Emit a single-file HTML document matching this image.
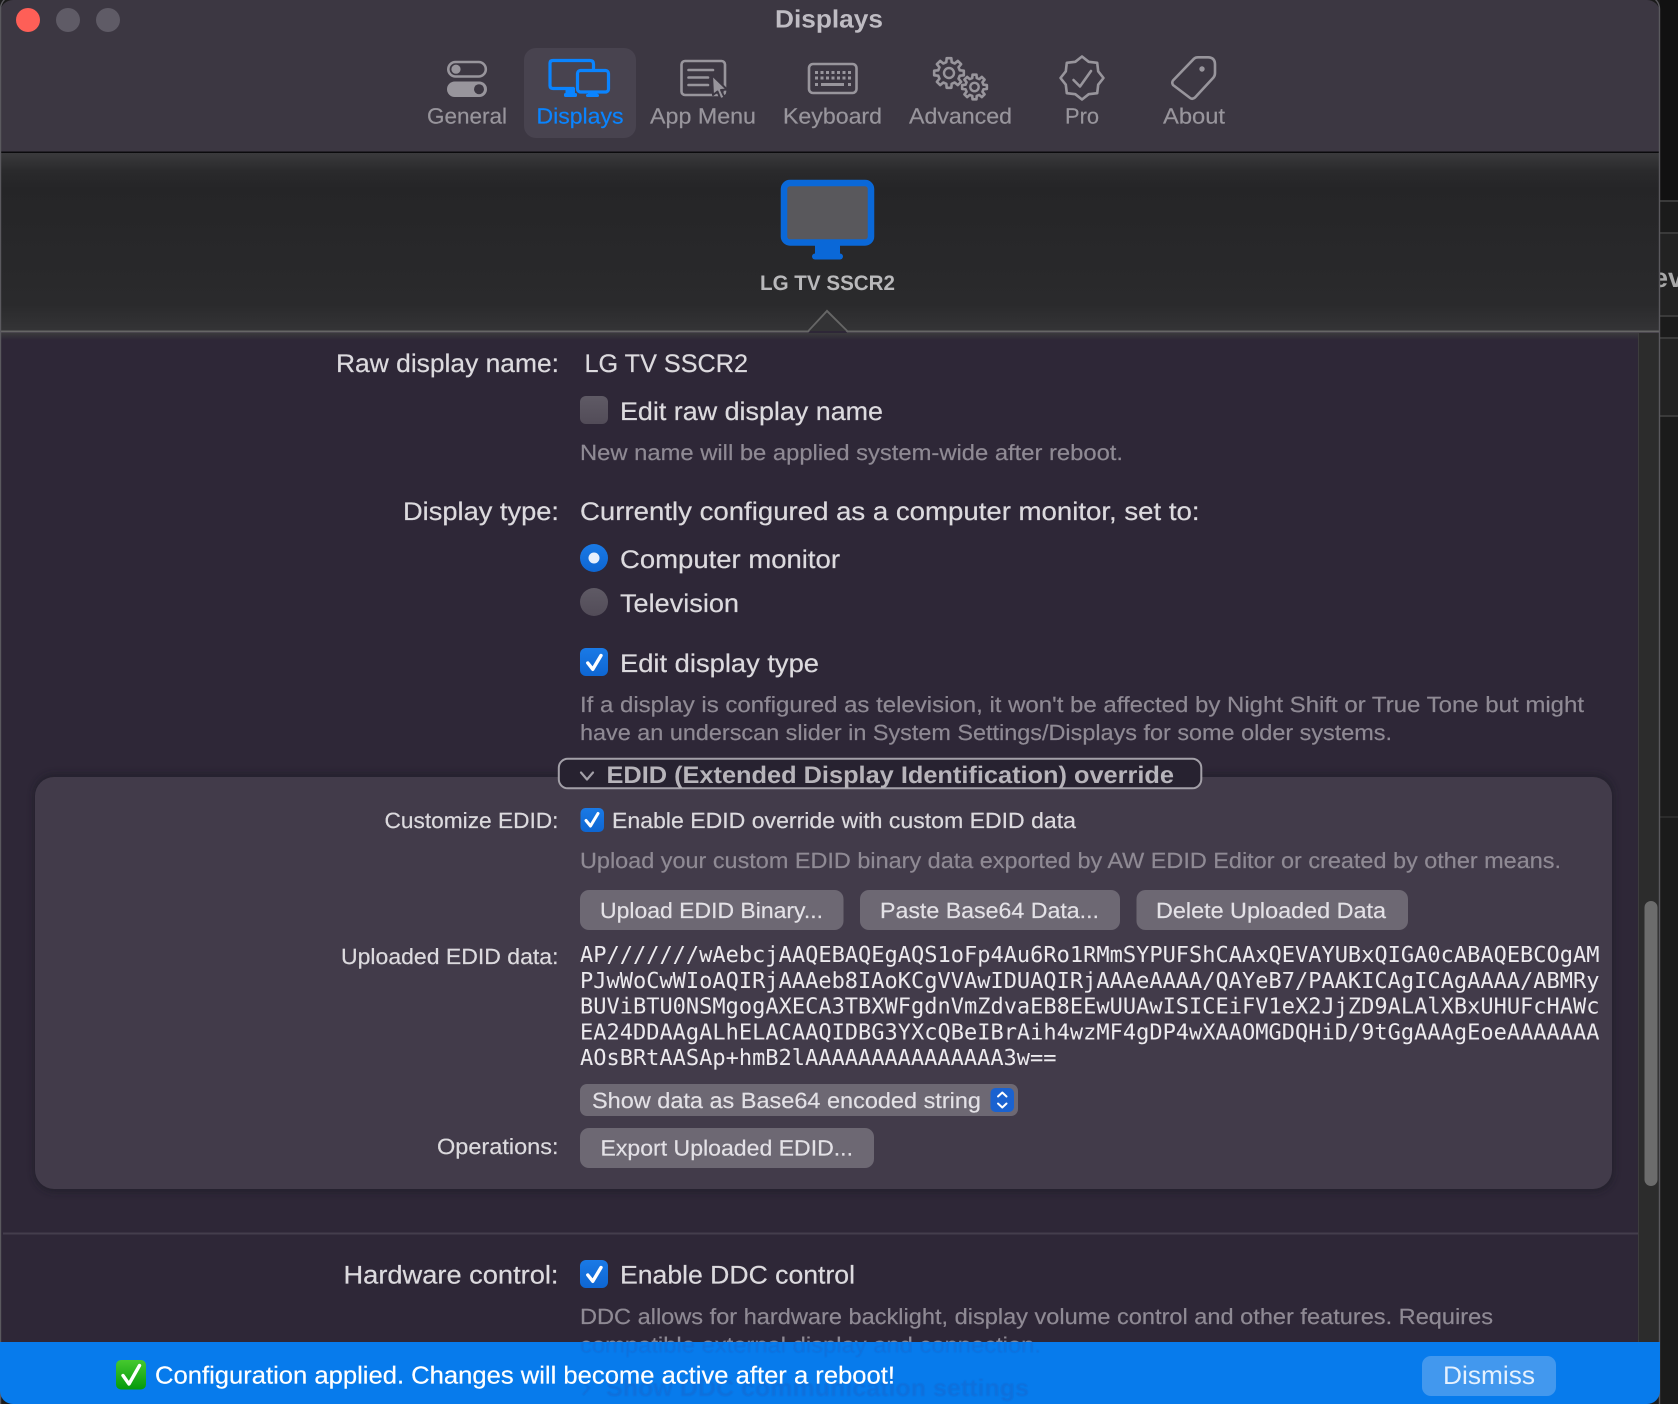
<!DOCTYPE html>
<html lang="en">
<head>
<meta charset="utf-8">
<title>Displays</title>
<style>
html,body{margin:0;padding:0;width:1678px;height:1404px;overflow:hidden;background:#1b1b1b}
svg{display:block}
text{font-family:"Liberation Sans",sans-serif;text-rendering:geometricPrecision;white-space:pre}
.tb{font-size:22px;fill:#98959c;stroke:#98959c;stroke-width:.2}
.lb{font-size:25.5px;fill:#dcdade;stroke:#dcdade;stroke-width:.22}
.sm{font-size:22px;fill:#dcdade;stroke:#dcdade;stroke-width:.2}
.hp{font-size:22px;fill:#8f8a94;stroke:#8f8a94;stroke-width:.2}
.bt{font-size:22px;fill:#e3e1e6;stroke:#e3e1e6;stroke-width:.18}
.mo{font-family:"DejaVu Sans Mono","Liberation Mono",monospace;font-size:22px;fill:#eceaee}
.ic{fill:none;stroke:#98959c;stroke-width:2.6;stroke-linejoin:round;stroke-linecap:round}
.ck{fill:none;stroke:#fff;stroke-width:3.4;stroke-linecap:round;stroke-linejoin:round}
</style>
</head>
<body>
<svg xmlns="http://www.w3.org/2000/svg" width="1678" height="1404" viewBox="0 0 1678 1404">
<defs>
<clipPath id="win"><rect x="0" y="0" width="1660" height="1404" rx="13"/></clipPath>
<clipPath id="aboveBanner"><rect x="0" y="0" width="1678" height="1342"/></clipPath>
<clipPath id="belowBanner"><rect x="0" y="1342" width="1678" height="62"/></clipPath>
<linearGradient id="band" x1="0" y1="0" x2="0" y2="1">
<stop offset="0" stop-color="#3a3a3c"/><stop offset=".1" stop-color="#2a2a2c"/><stop offset=".2" stop-color="#252527"/><stop offset=".85" stop-color="#2a2a2c"/><stop offset="1" stop-color="#343436"/>
</linearGradient>
<linearGradient id="fade" x1="0" y1="0" x2="0" y2="1">
<stop offset="0" stop-color="#3a3a3c"/><stop offset="1" stop-color="#2e2737"/>
</linearGradient>
<linearGradient id="off" x1="0" y1="0" x2="0" y2="1"><stop offset="0" stop-color="#5f5a65"/><stop offset="1" stop-color="#524c58"/></linearGradient>
<linearGradient id="on" x1="0" y1="0" x2="0" y2="1"><stop offset="0" stop-color="#1a7ae6"/><stop offset="1" stop-color="#0e66d2"/></linearGradient>
<linearGradient id="grn" x1="0" y1="0" x2="0" y2="1"><stop offset="0" stop-color="#46c92e"/><stop offset="1" stop-color="#049a0c"/></linearGradient>
<filter id="pshadow" x="-5%" y="-5%" width="110%" height="110%"><feGaussianBlur stdDeviation="3"/></filter>
<filter id="soft" x="-2%" y="-20%" width="104%" height="140%"><feGaussianBlur stdDeviation="0.5"/></filter>
</defs>

<!-- outside window -->
<rect width="1678" height="1404" fill="#1b1b1b"/>
<rect x="1660" y="0" width="18" height="200" fill="#111"/>
<rect x="1660" y="200" width="18" height="2" fill="#3a3a3a"/>
<rect x="1660" y="232" width="18" height="2" fill="#3a3a3a"/>
<rect x="1660" y="234" width="18" height="81" fill="#222"/>
<rect x="1660" y="315" width="18" height="2" fill="#3a3a3a"/>
<rect x="1660" y="337" width="18" height="2" fill="#3a3a3a"/>
<rect x="1660" y="339" width="18" height="76" fill="#222"/>
<rect x="1660" y="415" width="18" height="2" fill="#3a3a3a"/>
<rect x="1660" y="816" width="18" height="2" fill="#2b2b2b"/>
<text x="1653" y="287" font-size="27" font-weight="700" fill="#a8a8a8">ev</text>

<g clip-path="url(#win)">
<!-- header -->
<rect x="0" y="0" width="1660" height="153" fill="#3c3742"/>
<rect x="0" y="151.5" width="1660" height="1.6" fill="#0b0b0d"/>
<!-- display band -->
<rect x="0" y="153" width="1660" height="178" fill="url(#band)"/>
<!-- content -->
<rect x="0" y="331" width="1660" height="1073" fill="#2e2737"/>
<rect x="0" y="333" width="1660" height="7" fill="url(#fade)"/>
<!-- scrollbar track -->
<rect x="1638" y="333" width="22" height="1012" fill="#2c2c2c"/>
<rect x="1638" y="333" width="1" height="1012" fill="#3d3d3d"/>
<rect x="1644.500" y="901" width="13" height="285" rx="6.500" fill="#6c6c6c"/>
<!-- band line + triangle -->
<path d="M0 331.5H808L827 311L847.5 331.5H1660" fill="none" stroke="#666" stroke-width="2"/>
<path d="M809.5 331L827 312.5L846 331Z" fill="#333335"/>
</g>
<rect x="0.5" y="-4" width="1659" height="1420" rx="13" fill="none" stroke="#5a595e" stroke-width="1.400"/>

<!-- traffic lights -->
<circle cx="28" cy="20" r="12" fill="#fe5f57"/>
<circle cx="68" cy="20" r="12" fill="#5f5b66"/>
<circle cx="108" cy="20" r="12" fill="#5f5b66"/>
<text x="775" y="27.5" font-size="25" font-weight="700" fill="#bfbcc3" textLength="108" lengthAdjust="spacingAndGlyphs">Displays</text>

<!-- toolbar -->
<rect x="524" y="48" width="112" height="90" rx="12" fill="#48434f"/>
<text class="tb" x="427" y="123.5" textLength="80" lengthAdjust="spacingAndGlyphs">General</text>
<text class="tb" x="536.500" y="123.5" textLength="87" lengthAdjust="spacingAndGlyphs" style="fill:#0a84ff;stroke:#0a84ff">Displays</text>
<text class="tb" x="650" y="123.5" textLength="106" lengthAdjust="spacingAndGlyphs">App Menu</text>
<text class="tb" x="783" y="123.5" textLength="99" lengthAdjust="spacingAndGlyphs">Keyboard</text>
<text class="tb" x="909" y="123.5" textLength="103" lengthAdjust="spacingAndGlyphs">Advanced</text>
<text class="tb" x="1065" y="123.5" textLength="34" lengthAdjust="spacingAndGlyphs">Pro</text>
<text class="tb" x="1163" y="123.5" textLength="62" lengthAdjust="spacingAndGlyphs">About</text>

<!-- General icon -->
<rect x="448.3" y="62" width="37.5" height="14.5" rx="7.25" class="ic"/>
<circle cx="456" cy="69.2" r="4.6" fill="#98959c"/>
<rect x="447" y="81.5" width="40" height="15.5" rx="7.75" fill="#98959c"/>
<circle cx="479" cy="89.2" r="5" fill="#3c3742"/>

<!-- Displays icon -->
<g fill="none" stroke="#0a84ff" stroke-width="3.200" stroke-linejoin="round">
<path d="M574.500 88.500H553Q550 88.500 550 85.500V63Q550 60.500 553 60.500H590Q593.500 60.500 593.500 64V69"/>
<rect x="577.500" y="70.500" width="31" height="21.500" rx="3"/>
</g>
<rect x="565.500" y="88" width="9.500" height="6" fill="#0a84ff"/>
<rect x="564" y="93" width="13" height="4" rx="1.500" fill="#0a84ff"/>
<rect x="588" y="92" width="9.500" height="3" fill="#0a84ff"/>
<rect x="586" y="94" width="13" height="3" rx="1.500" fill="#0a84ff"/>

<!-- App Menu icon -->
<rect x="681.500" y="61" width="43.500" height="34" rx="3.500" class="ic"/>
<path d="M688.500 70H713M688.500 77.500H708M688.500 85H708" class="ic"/>
<path d="M712 75L727 89.500L721 90L724.500 97.500L720.500 99L717.500 91.500L713 95Z" fill="#98959c" stroke="#3c3742" stroke-width="2" stroke-linejoin="round"/>

<!-- Keyboard icon -->
<rect x="809" y="64" width="47.500" height="29" rx="4" class="ic"/>
<g fill="#98959c">
<rect x="815" y="71" width="3" height="3"/><rect x="820.500" y="71" width="3" height="3"/><rect x="826" y="71" width="3" height="3"/><rect x="831.500" y="71" width="3" height="3"/><rect x="837" y="71" width="3" height="3"/><rect x="842.500" y="71" width="3" height="3"/><rect x="848" y="71" width="3" height="3"/>
<rect x="815" y="76.500" width="3" height="3"/><rect x="820.500" y="76.500" width="3" height="3"/><rect x="826" y="76.500" width="3" height="3"/><rect x="831.500" y="76.500" width="3" height="3"/><rect x="837" y="76.500" width="3" height="3"/><rect x="842.500" y="76.500" width="3" height="3"/><rect x="848" y="76.500" width="3" height="3"/>
<rect x="815" y="83" width="3" height="3"/><rect x="821" y="83" width="23" height="3"/><rect x="848" y="83" width="3" height="3"/>
</g>

<!-- Advanced icon -->
<polygon transform="translate(949 73) scale(15)" vector-effect="non-scaling-stroke" class="ic" points=".718,-.179 .988,-.156 .988,.156 .718,.179 .634,.381 .809,.588 .588,.809 .381,.634 .179,.718 .156,.988 -.156,.988 -.179,.718 -.381,.634 -.588,.809 -.809,.588 -.634,.381 -.718,.179 -.988,.156 -.988,-.156 -.718,-.179 -.634,-.381 -.809,-.588 -.588,-.809 -.381,-.634 -.179,-.718 -.156,-.988 .156,-.988 .179,-.718 .381,-.634 .588,-.809 .809,-.588 .634,-.381"/>
<circle cx="949" cy="73" r="5" class="ic" style="stroke-width:2.4"/>
<polygon transform="translate(974.500 87) scale(12.500)" vector-effect="non-scaling-stroke" class="ic" points=".718,-.179 .988,-.156 .988,.156 .718,.179 .634,.381 .809,.588 .588,.809 .381,.634 .179,.718 .156,.988 -.156,.988 -.179,.718 -.381,.634 -.588,.809 -.809,.588 -.634,.381 -.718,.179 -.988,.156 -.988,-.156 -.718,-.179 -.634,-.381 -.809,-.588 -.588,-.809 -.381,-.634 -.179,-.718 -.156,-.988 .156,-.988 .179,-.718 .381,-.634 .588,-.809 .809,-.588 .634,-.381"/>
<circle cx="974.500" cy="87" r="4.200" class="ic" style="stroke-width:2.4"/>

<!-- Pro icon -->
<polygon transform="translate(1082 78)" class="ic" points="21.500,0 16.200,6.700 15.200,15.200 6.700,16.200 0,21.500 -6.700,16.200 -15.200,15.200 -16.200,6.700 -21.500,0 -16.200,-6.700 -15.200,-15.200 -6.700,-16.200 0,-21.500 6.700,-16.200 15.200,-15.200 16.200,-6.700"/>
<path d="M1073.500 80L1080 86.500L1091 71" class="ic"/>

<!-- About icon -->
<path d="M1173 80.500L1194 58.700Q1195.500 57.300 1198 57.300H1208Q1215 57.500 1215 64.500V73Q1215 75.500 1213.500 77.500L1195 97.500Q1192 100 1189.500 97.500L1173 85Q1171.500 82.500 1173 80.500Z" class="ic"/>
<circle cx="1202" cy="69" r="2.700" fill="#98959c"/>

<!-- monitor -->
<rect x="784" y="183" width="87" height="59.500" rx="6" fill="#59585c" stroke="#0a68d8" stroke-width="6.500"/>
<rect x="815" y="245" width="25" height="11" fill="#0a68d8"/>
<rect x="812" y="253.500" width="31" height="6" rx="3" fill="#0a68d8"/>
<text x="760" y="290" font-size="21" font-weight="700" fill="#b9b9bb" textLength="135" lengthAdjust="spacingAndGlyphs">LG TV SSCR2</text>

<!-- upper form -->
<text class="lb" x="336" y="372" textLength="223" lengthAdjust="spacingAndGlyphs">Raw display name:</text>
<text class="lb" x="584.500" y="372" textLength="163.500" lengthAdjust="spacingAndGlyphs">LG TV SSCR2</text>
<rect x="580" y="396" width="28" height="28" rx="6" fill="url(#off)"/>
<text class="lb" x="620" y="420" textLength="263" lengthAdjust="spacingAndGlyphs">Edit raw display name</text>
<text class="hp" x="580" y="460" textLength="543" lengthAdjust="spacingAndGlyphs">New name will be applied system-wide after reboot.</text>
<text class="lb" x="403" y="520" textLength="156" lengthAdjust="spacingAndGlyphs">Display type:</text>
<text class="lb" x="580" y="520" textLength="619.500" lengthAdjust="spacingAndGlyphs">Currently configured as a computer monitor, set to:</text>
<circle cx="594" cy="558" r="14" fill="url(#on)"/>
<circle cx="594" cy="558" r="5.500" fill="#e6effc"/>
<text class="lb" x="620" y="568" textLength="220" lengthAdjust="spacingAndGlyphs">Computer monitor</text>
<circle cx="594" cy="602" r="14" fill="url(#off)"/>
<text class="lb" x="620" y="612" textLength="119" lengthAdjust="spacingAndGlyphs">Television</text>
<rect x="580" y="648" width="28" height="28" rx="6" fill="url(#on)"/>
<path class="ck" d="M587.800 663L592.800 669.300L601 655.500"/>
<text class="lb" x="620" y="672" textLength="199" lengthAdjust="spacingAndGlyphs">Edit display type</text>
<text class="hp" x="580" y="712" textLength="1004" lengthAdjust="spacingAndGlyphs">If a display is configured as television, it won't be affected by Night Shift or True Tone but might</text>
<text class="hp" x="580" y="740" textLength="812" lengthAdjust="spacingAndGlyphs">have an underscan slider in System Settings/Displays for some older systems.</text>

<!-- EDID panel -->
<rect x="33" y="773" width="1582" height="420" rx="22" fill="#1f1a26" opacity=".5" filter="url(#pshadow)"/>
<rect x="35" y="777" width="1577" height="412" rx="19" fill="#423b4a"/>
<rect x="558.800" y="758.800" width="642.500" height="29.500" rx="9" fill="#272230" stroke="#a3a0a8" stroke-width="2"/>
<path d="M581 772.500L587 779.500L593 772.500" fill="none" stroke="#a3a0a8" stroke-width="2.200" stroke-linecap="round" stroke-linejoin="round"/>
<text x="606.500" y="783" font-size="24" font-weight="700" fill="#b7b4ba" textLength="567.500" lengthAdjust="spacingAndGlyphs">EDID (Extended Display Identification) override</text>

<text class="sm" x="384.500" y="828" textLength="174" lengthAdjust="spacingAndGlyphs">Customize EDID:</text>
<rect x="580.500" y="808" width="23.500" height="24" rx="5" fill="url(#on)"/>
<path class="ck" style="stroke-width:3" d="M586 820.500L590.500 826L598 813.500"/>
<text class="sm" x="612" y="828" textLength="464" lengthAdjust="spacingAndGlyphs">Enable EDID override with custom EDID data</text>
<text class="hp" x="580" y="868" textLength="981" lengthAdjust="spacingAndGlyphs">Upload your custom EDID binary data exported by AW EDID Editor or created by other means.</text>

<rect x="580" y="890" width="263.500" height="40" rx="9" fill="#6d6873"/>
<rect x="860" y="890" width="260" height="40" rx="9" fill="#6d6873"/>
<rect x="1136.500" y="890" width="271.500" height="40" rx="9" fill="#6d6873"/>
<text class="bt" x="600" y="918" textLength="223" lengthAdjust="spacingAndGlyphs">Upload EDID Binary...</text>
<text class="bt" x="880" y="918" textLength="219" lengthAdjust="spacingAndGlyphs">Paste Base64 Data...</text>
<text class="bt" x="1156" y="918" textLength="230" lengthAdjust="spacingAndGlyphs">Delete Uploaded Data</text>

<text class="sm" x="341" y="964" textLength="217.500" lengthAdjust="spacingAndGlyphs">Uploaded EDID data:</text>
<text class="mo" x="580" y="962" textLength="1019.500" lengthAdjust="spacingAndGlyphs">AP///////wAebcjAAQEBAQEgAQS1oFp4Au6Ro1RMmSYPUFShCAAxQEVAYUBxQIGA0cABAQEBCOgAM</text>
<text class="mo" x="580" y="987.800" textLength="1019.500" lengthAdjust="spacingAndGlyphs">PJwWoCwWIoAQIRjAAAeb8IAoKCgVVAwIDUAQIRjAAAeAAAA/QAYeB7/PAAKICAgICAgAAAA/ABMRy</text>
<text class="mo" x="580" y="1013.600" textLength="1019.500" lengthAdjust="spacingAndGlyphs">BUViBTU0NSMgogAXECA3TBXWFgdnVmZdvaEB8EEwUUAwISICEiFV1eX2JjZD9ALAlXBxUHUFcHAWc</text>
<text class="mo" x="580" y="1039.400" textLength="1019.500" lengthAdjust="spacingAndGlyphs">EA24DDAAgALhELACAAQIDBG3YXcQBeIBrAih4wzMF4gDP4wXAAOMGDQHiD/9tGgAAAgEoeAAAAAAA</text>
<text class="mo" x="580" y="1065.200" textLength="476.500" lengthAdjust="spacingAndGlyphs">AOsBRtAASAp+hmB2lAAAAAAAAAAAAAAA3w==</text>

<rect x="580" y="1084" width="438" height="32" rx="7" fill="#6d6873"/>
<text class="bt" x="592" y="1108" textLength="389" lengthAdjust="spacingAndGlyphs">Show data as Base64 encoded string</text>
<rect x="990.500" y="1088" width="23.500" height="24" rx="5" fill="#1a62d0"/>
<path d="M998 1096.500L1002.300 1092.500L1006.500 1096.500M998 1103.500L1002.300 1107.500L1006.500 1103.500" fill="none" stroke="#fff" stroke-width="2" stroke-linecap="round" stroke-linejoin="round"/>

<text class="sm" x="437" y="1154" textLength="121.500" lengthAdjust="spacingAndGlyphs">Operations:</text>
<rect x="580" y="1128" width="294" height="40" rx="9" fill="#6d6873"/>
<text class="bt" x="600.500" y="1155.500" textLength="252.500" lengthAdjust="spacingAndGlyphs">Export Uploaded EDID...</text>

<!-- lower form -->
<rect x="3" y="1232.500" width="1635" height="2" fill="#443e4c"/>
<text class="lb" x="343.500" y="1283.500" textLength="215" lengthAdjust="spacingAndGlyphs">Hardware control:</text>
<rect x="580" y="1260" width="28" height="28" rx="6" fill="url(#on)"/>
<path class="ck" d="M587.800 1275L592.800 1281.300L601 1267.500"/>
<text class="lb" x="620" y="1283.500" textLength="235" lengthAdjust="spacingAndGlyphs">Enable DDC control</text>
<text class="hp" x="580" y="1324" textLength="913" lengthAdjust="spacingAndGlyphs">DDC allows for hardware backlight, display volume control and other features. Requires</text>
<text class="hp" x="580" y="1352.500" textLength="461" lengthAdjust="spacingAndGlyphs" clip-path="url(#aboveBanner)">compatible external display and connection.</text>

<!-- banner -->
<g clip-path="url(#win)">
<rect x="0" y="1342" width="1660" height="62" fill="#077bec"/>
</g>
<g filter="url(#soft)">
<text x="580" y="1352.500" font-size="22" textLength="461" lengthAdjust="spacingAndGlyphs" fill="#0b70dc" clip-path="url(#belowBanner)">compatible external display and connection.</text>
<path d="M583 1381L589 1388L583 1395" fill="none" stroke="#0b70dc" stroke-width="2.200"/>
<text x="606" y="1396" font-size="24" font-weight="700" fill="#0b70dc" textLength="423" lengthAdjust="spacingAndGlyphs">Show DDC communication settings</text>
</g>
<rect x="116" y="1360" width="30" height="29.500" rx="5" fill="url(#grn)"/>
<path d="M123 1375.500L129 1384L139.500 1365.500" fill="none" stroke="#fff" stroke-width="3.400" stroke-linecap="round" stroke-linejoin="round"/>
<text x="155" y="1383.500" font-size="24.500" fill="#fff" stroke="#fff" stroke-width=".2" textLength="740" lengthAdjust="spacingAndGlyphs">Configuration applied. Changes will become active after a reboot!</text>
<rect x="1422" y="1356" width="134" height="40" rx="9" fill="#4298ee"/>
<text x="1443" y="1384" font-size="25.500" fill="#e5f1fe" textLength="92" lengthAdjust="spacingAndGlyphs">Dismiss</text>
</svg>
</body>
</html>
